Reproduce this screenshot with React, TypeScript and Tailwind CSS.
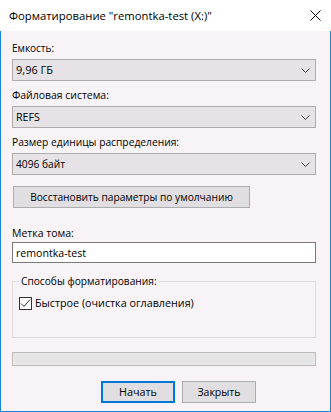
import React from "react";

const font = { fontFamily: '"Open Sans", "Noto Sans", sans-serif' };

function Chevron() {
  return (
    <svg width="9" height="5" viewBox="0 0 9 5" className="shrink-0">
      <polyline points="0.5,0.5 4.5,4.5 8.5,0.5" fill="none" stroke="#3a3a3a" strokeWidth="1" />
    </svg>
  );
}

function Combo({ value, size }: { value: string; size: string }) {
  return (
    <div className="mt-[3px] h-[22px] w-full border border-[#adadad] bg-[#e6e2e6] flex items-center justify-between pl-[3px] pr-[5px]">
      <span className={`leading-[16px] ${size}`}>{value}</span>
      <Chevron />
    </div>
  );
}

export default function App() {
  return (
    <div
      className="w-[331px] h-[412px] flex flex-col text-[10.5px] text-black bg-white whitespace-nowrap"
      style={font}
    >
      <div className="h-[31px] shrink-0 bg-white flex items-center justify-between pl-[9px] pr-[10px]">
        <span className="leading-[16px] text-[11.3px]">Форматирование "remontka-test (X:)"</span>
        <svg width="11" height="11" viewBox="0 0 11 11">
          <line x1="0.5" y1="0.5" x2="10.5" y2="10.5" stroke="#000" strokeWidth="1" />
          <line x1="10.5" y1="0.5" x2="0.5" y2="10.5" stroke="#000" strokeWidth="1" />
        </svg>
      </div>
      <div className="flex-1 flex flex-col bg-[#f7f3f7] border-x border-b border-[#1883d7] pl-[11px] pr-[14px] pt-[9px]">
        <div className="leading-[16px] text-[10px]">Емкость:</div>
        <Combo value="9,96 ГБ" size="text-[11px]" />
        <div className="mt-[6px] leading-[16px] text-[10.45px]">Файловая система:</div>
        <Combo value="REFS" size="text-[10.7px]" />
        <div className="mt-[6px] leading-[16px] text-[10.25px]">Размер единицы распределения:</div>
        <Combo value="4096 байт" size="text-[10.2px]" />
        <div className="mt-[11px] ml-[1px] w-[237px] h-[22px] border border-[#adadad] bg-[#e1dee1] flex items-center justify-center leading-[16px] text-[10.2px]">
          Восстановить параметры по умолчанию
        </div>
        <div className="mt-[17px] leading-[16px] text-[10.5px]">Метка тома:</div>
        <div className="mt-[1px] h-[21px] w-full border border-[#7a7a7a] bg-white flex items-center pl-[3px] leading-[16px] text-[10.6px]">
          remontka-test
        </div>
        <fieldset className="mt-[10px] border border-[#dcdcdc] px-[6px] pb-[26px]">
          <legend className="px-[2px] leading-[16px] text-[10.2px]">Способы форматирования:</legend>
          <div className="mt-[6px] h-[16px] flex items-center gap-[3px]">
            <div className="w-[13px] h-[13px] border border-[#333333] bg-white flex items-center justify-center">
              <svg width="11" height="11" viewBox="0 0 11 11">
                <polyline points="1,5.5 4,8.5 10,1.5" fill="none" stroke="#333333" strokeWidth="1" />
              </svg>
            </div>
            <span className="leading-[16px] text-[10.76px]">Быстрое (очистка оглавления)</span>
          </div>
        </fieldset>
        <div className="mt-[14px] h-[14px] w-full border border-[#bcbcbc] bg-[#e6e6e6]" />
        <div className="mt-[15px] flex justify-end gap-[7px] mr-[60px]">
          <div className="w-[74px] h-[22px] border-2 border-[#0078d7] bg-[#e1dee1] flex items-center justify-center leading-[16px] text-[10.8px]">
            Начать
          </div>
          <div className="w-[74px] h-[22px] border border-[#adadad] bg-[#e1dee1] flex items-center justify-center leading-[16px] text-[10.5px]">
            Закрыть
          </div>
        </div>
      </div>
    </div>
  );
}
